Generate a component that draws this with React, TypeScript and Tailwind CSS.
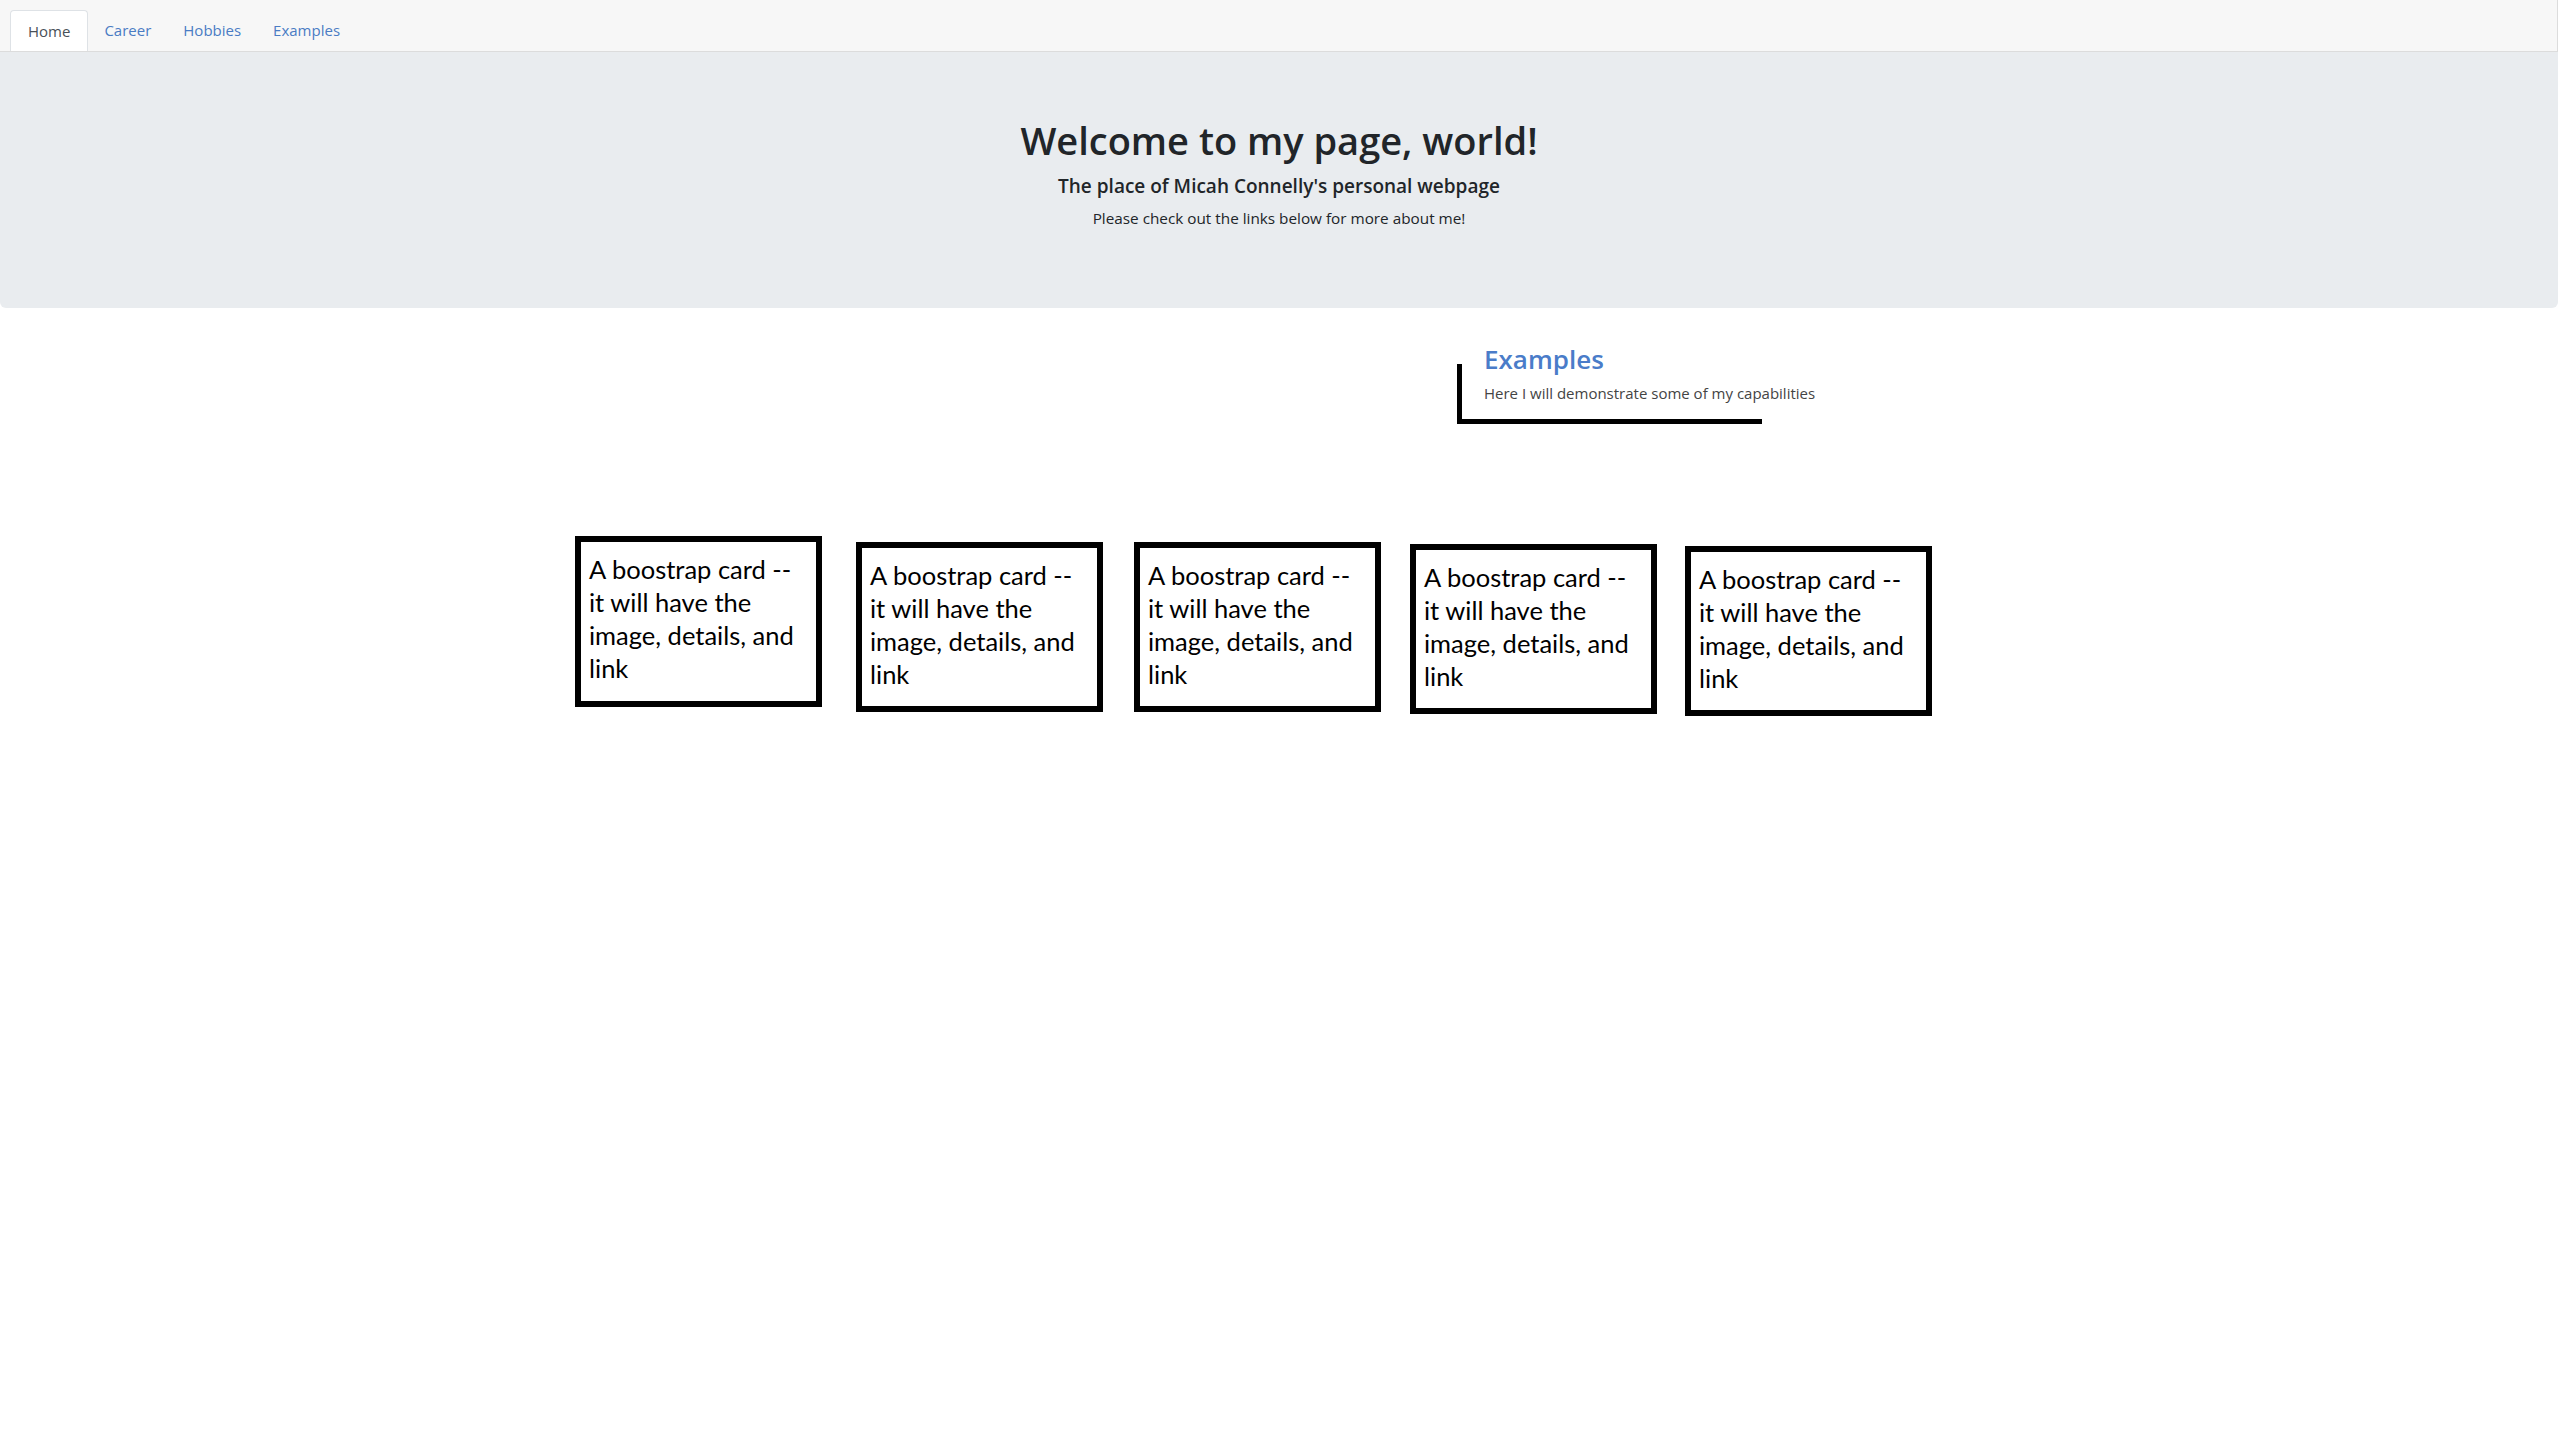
import React from "react";

const tabs = ["Home", "Career", "Hobbies", "Examples"];

const cardLines = [
  "A boostrap card --",
  "it will have the",
  "image, details, and",
  "link",
];

// the cards in the reference are a hand-drawn mockup, so each sits a little off
const cards = [
  { id: 1, className: "ml-0 mt-0 h-[171px]" },
  { id: 2, className: "ml-[34px] mt-[6px] h-[170px]" },
  { id: 3, className: "ml-[31px] mt-[6px] h-[170px]" },
  { id: 4, className: "ml-[29px] mt-[8px] h-[170px]" },
  { id: 5, className: "ml-[28px] mt-[10px] h-[170px]" },
];

function NavTabs() {
  return (
    <nav className="h-[52px] bg-[#f7f7f7] border-b border-r border-[#dcdcdc] flex items-end pl-[10px]">
      {tabs.map((tab, i) =>
        i === 0 ? (
          <a
            key={tab}
            href="#"
            className="h-[41px] px-[17px] flex items-center bg-white border border-b-0 border-[#dee2e6] rounded-t-[4px] text-[15px] text-[#495057]"
          >
            {tab}
          </a>
        ) : (
          <a
            key={tab}
            href="#"
            className="h-[41px] px-[16px] flex items-center text-[15px] text-[#4a7cc4]"
          >
            {tab}
          </a>
        )
      )}
    </nav>
  );
}

function Jumbotron() {
  return (
    <header className="h-[256px] bg-[#e9ecef] rounded-b-[6px] flex flex-col items-center pt-[66px] text-[#212529]">
      <h1 className="text-[38px] leading-[1.2] font-semibold">
        Welcome to my page, world!
      </h1>
      <h5 className="mt-[11px] text-[19px] leading-[1.2] font-semibold">
        The place of Micah Connelly's personal webpage
      </h5>
      <p className="mt-[10px] text-[15.3px] leading-[1.5]">
        Please check out the links below for more about me!
      </p>
    </header>
  );
}

function ExamplesIntro() {
  return (
    <section className="mt-[36px] ml-[1457px] w-[420px]">
      <h2 className="pl-[27px] text-[26px] leading-[1.2] font-semibold text-[#4a7cc9]">
        Examples
      </h2>
      <div className="-mt-[11px] w-[305px] h-[60px] border-l-[5px] border-b-[5px] border-black pl-[22px] pt-[18px]">
        <p className="whitespace-nowrap text-[15px] leading-[1.5] text-[#444]">
          Here I will demonstrate some of my capabilities
        </p>
      </div>
    </section>
  );
}

function CardRow() {
  return (
    <div className="mt-[112px] pl-[575px] flex items-start">
      {cards.map((card) => (
        <div
          key={card.id}
          className={`w-[247px] border-[6px] border-black bg-white pl-[8px] pt-[11px] font-['Lato',sans-serif] text-[25.5px] leading-[33px] text-black ${card.className}`}
        >
          {cardLines.map((line) => (
            <div key={line} className="whitespace-nowrap">
              {line}
            </div>
          ))}
        </div>
      ))}
    </div>
  );
}

export default function App() {
  return (
    <div className="w-[2558px] min-h-[1440px] bg-white font-['Open_Sans','Noto_Sans',sans-serif]">
      <NavTabs />
      <Jumbotron />
      <ExamplesIntro />
      <CardRow />
    </div>
  );
}
